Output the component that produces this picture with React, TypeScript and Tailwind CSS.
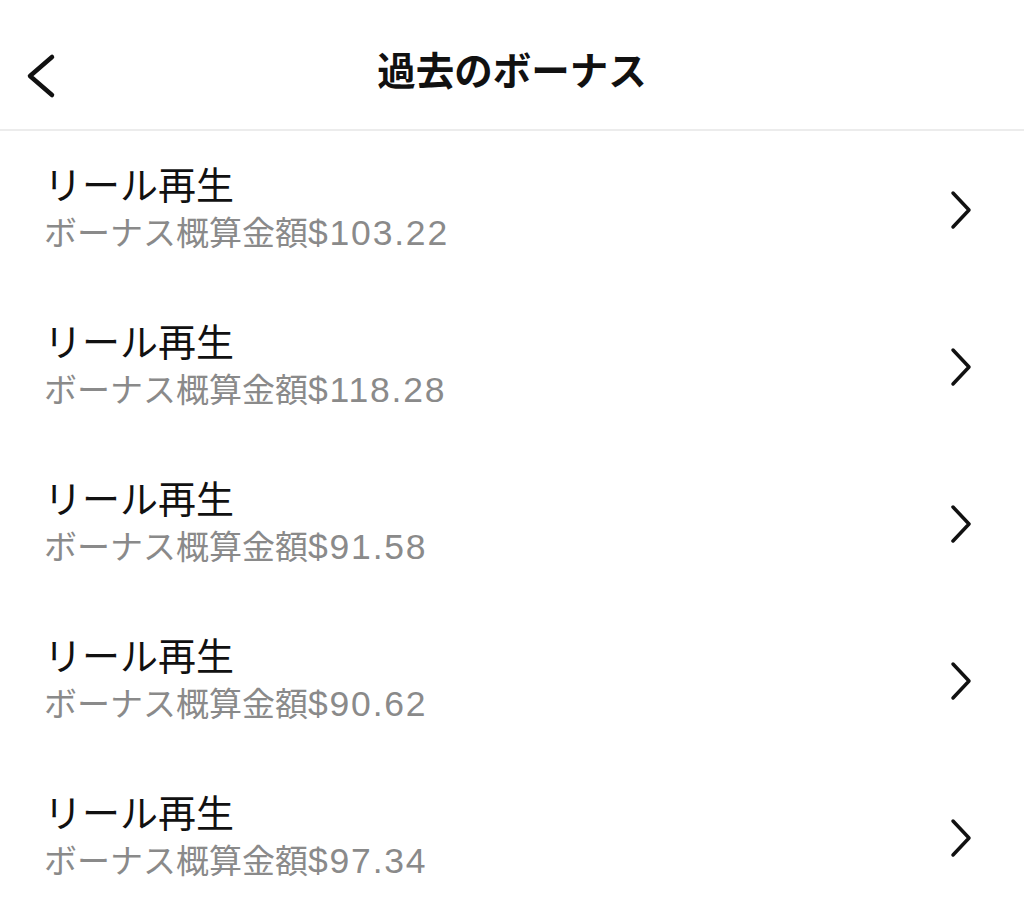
const rows = ["$103.22", "$118.28", "$91.58", "$90.62", "$97.34"];

const App = () => {
  return (
    <div
      className="w-[1024px] h-[910px] bg-white overflow-hidden"
      style={{ fontFamily: '"Liberation Sans", "Noto Sans CJK JP", sans-serif' }}
    >
      {/* Header */}
      <div className="relative h-[131px] border-b-2 border-[#ececec] flex items-center justify-center">
        <svg
          className="absolute left-[22px] top-[53px]"
          width="36"
          height="46"
          viewBox="0 0 36 46"
          fill="none"
        >
          <path d="M30 4 L8 23 L30 42" stroke="#111" strokeWidth="4.5" strokeLinecap="round" strokeLinejoin="round" />
        </svg>
        <h1 className="text-[38.5px] font-bold text-[#111] leading-none mt-[16px]">過去のボーナス</h1>
      </div>

      {/* List */}
      <div className="flex flex-col">
        {rows.map((amount, i) => (
          <div key={i} className="h-[157px] flex items-center pl-[44px] pr-[50px]">
            <div className="flex-1 flex flex-col -mt-[2px]">
              <span className="text-[38px] leading-[46px] text-[#111]">リール再生</span>
              <span className="text-[33px] leading-[42px] text-[#8a8a8a] mt-[3px]">
                ボーナス概算金額<span className="text-[35.5px] tracking-[1.8px]">{amount}</span>
              </span>
            </div>
            <svg width="26" height="40" viewBox="0 0 26 40" fill="none">
              <path d="M5 3 L21 20 L5 37" stroke="#111" strokeWidth="3.5" strokeLinecap="round" strokeLinejoin="round" />
            </svg>
          </div>
        ))}
      </div>
    </div>
  );
};

export default App;
